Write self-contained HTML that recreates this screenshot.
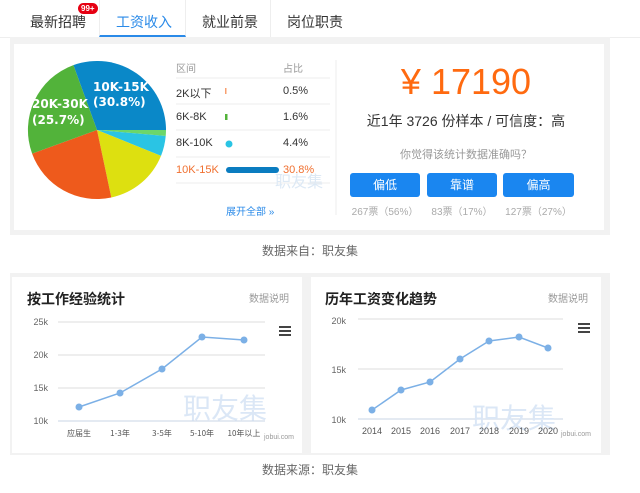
<!DOCTYPE html>
<html><head><meta charset="utf-8"><style>
body{margin:0;width:640px;height:493px;background:#fff;font-family:"Liberation Sans","Noto Sans CJK SC",sans-serif;position:relative;overflow:hidden;color:#333}
.a{position:absolute;white-space:nowrap}
</style></head><body>
<!-- tabs -->
<div class="a" style="left:0;top:0;width:640px;height:37px;border-bottom:1px solid #eee"></div>
<div class="a" style="left:30px;top:12px;font-size:14px;color:#333">最新招聘</div>
<div class="a" style="left:78px;top:3px;background:#e60012;color:#fff;font-size:8px;border-radius:7px;padding:1px 3px;font-weight:bold">99+</div>
<div class="a" style="left:99px;top:0;width:85px;height:35px;border-bottom:2px solid #2a8ae8;border-left:1px solid #eee;border-right:1px solid #eee"></div>
<div class="a" style="left:116px;top:12px;font-size:14px;color:#2a8ae8">工资收入</div>
<div class="a" style="left:202px;top:12px;font-size:14px">就业前景</div>
<div class="a" style="left:270px;top:0;width:1px;height:37px;background:#eee"></div>
<div class="a" style="left:287px;top:12px;font-size:14px">岗位职责</div>
<!-- top panel -->
<div class="a" style="left:10px;top:37px;width:600px;height:198px;background:#f2f2f2"></div>
<div class="a" style="left:14px;top:44px;width:590px;height:186px;background:#fff"></div>
<svg class="a" style="left:0;top:0" width="340" height="240">
<path d="M97 130 L73.4 65.1 A69 69 0 0 1 166 130Z" fill="#0a88c8"/>
<path d="M97 130 L166 130 A69 69 0 0 1 165.7 136Z" fill="#6bd66b"/>
<path d="M97 130 L165.7 136 A69 69 0 0 1 161 155.9Z" fill="#2ac4e4"/>
<path d="M97 130 L161 155.9 A69 69 0 0 1 111.3 197.5Z" fill="#dde010"/>
<path d="M97 130 L111.3 197.5 A69 69 0 0 1 32.1 153.6Z" fill="#ee5a1c"/>
<path d="M97 130 L32.1 153.6 A69 69 0 0 1 73.4 65.1Z" fill="#52b33a"/>
<text x="93" y="91" fill="#fff" font-size="12" font-weight="bold" font-family="DejaVu Sans">10K-15K</text>
<text x="93" y="106" fill="#fff" font-size="12" font-weight="bold" font-family="DejaVu Sans">(30.8%)</text>
<text x="32" y="108" fill="#fff" font-size="12" font-weight="bold" font-family="DejaVu Sans">20K-30K</text>
<text x="32" y="124" fill="#fff" font-size="12" font-weight="bold" font-family="DejaVu Sans">(25.7%)</text>
<g stroke="#eee"><line x1="176" y1="78" x2="330" y2="78"/><line x1="176" y1="104" x2="330" y2="104"/><line x1="176" y1="130" x2="330" y2="130"/><line x1="176" y1="157" x2="330" y2="157"/><line x1="176" y1="183" x2="330" y2="183"/><line x1="336" y1="60" x2="336" y2="215"/></g>
<rect x="225" y="88" width="1.5" height="6" fill="#f8a070"/>
<rect x="225" y="114" width="2.5" height="6" fill="#52b33a"/>
<circle cx="229" cy="144" r="3.5" fill="#2ac4e4"/>
<rect x="226" y="167" width="53" height="6" rx="3" fill="#0a7cc0"/>
</svg>
<div class="a" style="left:176px;top:60px;font-size:10px;color:#999">区间</div>
<div class="a" style="left:283px;top:60px;font-size:10px;color:#999">占比</div>
<div class="a" style="left:176px;top:85px;font-size:11px">2K以下</div><div class="a" style="left:283px;top:85px;font-size:11px">0.5%</div>
<div class="a" style="left:176px;top:111px;font-size:11px">6K-8K</div><div class="a" style="left:283px;top:111px;font-size:11px">1.6%</div>
<div class="a" style="left:176px;top:137px;font-size:11px">8K-10K</div><div class="a" style="left:283px;top:137px;font-size:11px">4.4%</div>
<div class="a" style="left:176px;top:164px;font-size:11px;color:#f07030">10K-15K</div><div class="a" style="left:283px;top:164px;font-size:11px;color:#f07030">30.8%</div>
<div class="a" style="left:275px;top:168px;font-size:16px;color:#dde9f5">职友集</div>
<div class="a" style="left:226px;top:203px;font-size:10px;color:#2a8ae8">展开全部 »</div>
<div class="a" style="left:336px;top:62px;width:260px;text-align:center;font-size:36px;color:#ff6a10;line-height:40px">¥ 17190</div>
<div class="a" style="left:336px;top:111px;width:260px;text-align:center;font-size:14px">近1年 3726 份样本 / 可信度：高</div>
<div class="a" style="left:336px;top:146px;width:260px;text-align:center;font-size:11px;color:#999">你觉得该统计数据准确吗？</div>
<div class="a" style="left:350px;top:173px;width:70px;height:24px;background:#1a86f0;border-radius:3px;color:#fff;font-size:12px;text-align:center;line-height:24px">偏低</div>
<div class="a" style="left:427px;top:173px;width:70px;height:24px;background:#1a86f0;border-radius:3px;color:#fff;font-size:12px;text-align:center;line-height:24px">靠谱</div>
<div class="a" style="left:503px;top:173px;width:71px;height:24px;background:#1a86f0;border-radius:3px;color:#fff;font-size:12px;text-align:center;line-height:24px">偏高</div>
<div class="a" style="left:350px;top:203px;width:70px;text-align:center;font-size:10px;color:#aaa">267票（56%）</div>
<div class="a" style="left:427px;top:203px;width:70px;text-align:center;font-size:10px;color:#aaa">83票（17%）</div>
<div class="a" style="left:503px;top:203px;width:71px;text-align:center;font-size:10px;color:#aaa">127票（27%）</div>
<div class="a" style="left:0;top:242px;width:620px;text-align:center;font-size:12px;color:#666">数据来自：职友集</div>
<!-- bottom -->
<div class="a" style="left:10px;top:273px;width:600px;height:182px;background:#f2f2f2"></div>
<div class="a" style="left:12px;top:277px;width:290px;height:176px;background:#fff"></div>
<div class="a" style="left:311px;top:277px;width:290px;height:176px;background:#fff"></div>
<div class="a" style="left:27px;top:289px;font-size:14px;font-weight:bold;color:#222">按工作经验统计</div>
<div class="a" style="left:249px;top:290px;font-size:10px;color:#999">数据说明</div>
<div class="a" style="left:325px;top:289px;font-size:14px;font-weight:bold;color:#222">历年工资变化趋势</div>
<div class="a" style="left:548px;top:290px;font-size:10px;color:#999">数据说明</div>
<svg class="a" style="left:0;top:0" width="640" height="493" font-family="Liberation Sans" >
<g stroke="#ddd"><line x1="58" y1="322" x2="265" y2="322"/><line x1="58" y1="355" x2="265" y2="355"/><line x1="58" y1="388" x2="265" y2="388"/><line x1="358" y1="319" x2="563" y2="319"/><line x1="358" y1="369" x2="563" y2="369"/></g>
<g stroke="#c8d4e6"><line x1="58" y1="421" x2="265" y2="421"/><line x1="358" y1="419" x2="563" y2="419"/></g>
<g font-size="9" fill="#666" text-anchor="end"><text x="48" y="325">25k</text><text x="48" y="358">20k</text><text x="48" y="391">15k</text><text x="48" y="424">10k</text><text x="346" y="324">20k</text><text x="346" y="373">15k</text><text x="346" y="423">10k</text></g>
<text x="183" y="418" font-size="28" fill="#dbe7f6" font-family="Noto Sans CJK SC">职友集</text>
<text x="472" y="428" font-size="28" fill="#dbe7f6" font-family="Noto Sans CJK SC">职友集</text>
<polyline points="79,407 120,393 162,369 202,337 244,340" fill="none" stroke="#7cb0e6" stroke-width="1.5"/>
<g fill="#7cb0e6"><circle cx="79" cy="407" r="3.5"/><circle cx="120" cy="393" r="3.5"/><circle cx="162" cy="369" r="3.5"/><circle cx="202" cy="337" r="3.5"/><circle cx="244" cy="340" r="3.5"/></g>
<polyline points="372,410 401,390 430,382 460,359 489,341 519,337 548,348" fill="none" stroke="#7cb0e6" stroke-width="1.5"/>
<g fill="#7cb0e6"><circle cx="372" cy="410" r="3.5"/><circle cx="401" cy="390" r="3.5"/><circle cx="430" cy="382" r="3.5"/><circle cx="460" cy="359" r="3.5"/><circle cx="489" cy="341" r="3.5"/><circle cx="519" cy="337" r="3.5"/><circle cx="548" cy="348" r="3.5"/></g>
<g font-size="8" fill="#555" text-anchor="middle" font-family="Noto Sans CJK SC"><text x="79" y="436">应届生</text><text x="120" y="436">1-3年</text><text x="162" y="436">3-5年</text><text x="202" y="436">5-10年</text><text x="244" y="436">10年以上</text></g>
<g font-size="9" fill="#555" text-anchor="middle"><text x="372" y="434">2014</text><text x="401" y="434">2015</text><text x="430" y="434">2016</text><text x="460" y="434">2017</text><text x="489" y="434">2018</text><text x="519" y="434">2019</text><text x="548" y="434">2020</text></g>
<text x="264" y="439" font-size="7" fill="#999">jobui.com</text>
<text x="561" y="436" font-size="7" fill="#999">jobui.com</text>
<g stroke="#444" stroke-width="2"><line x1="279" y1="327" x2="291" y2="327"/><line x1="279" y1="331" x2="291" y2="331"/><line x1="279" y1="335" x2="291" y2="335"/><line x1="578" y1="324" x2="590" y2="324"/><line x1="578" y1="328" x2="590" y2="328"/><line x1="578" y1="332" x2="590" y2="332"/></g>
</svg>
<div class="a" style="left:0;top:461px;width:620px;text-align:center;font-size:12px;color:#666">数据来源：职友集</div>
</body></html>
